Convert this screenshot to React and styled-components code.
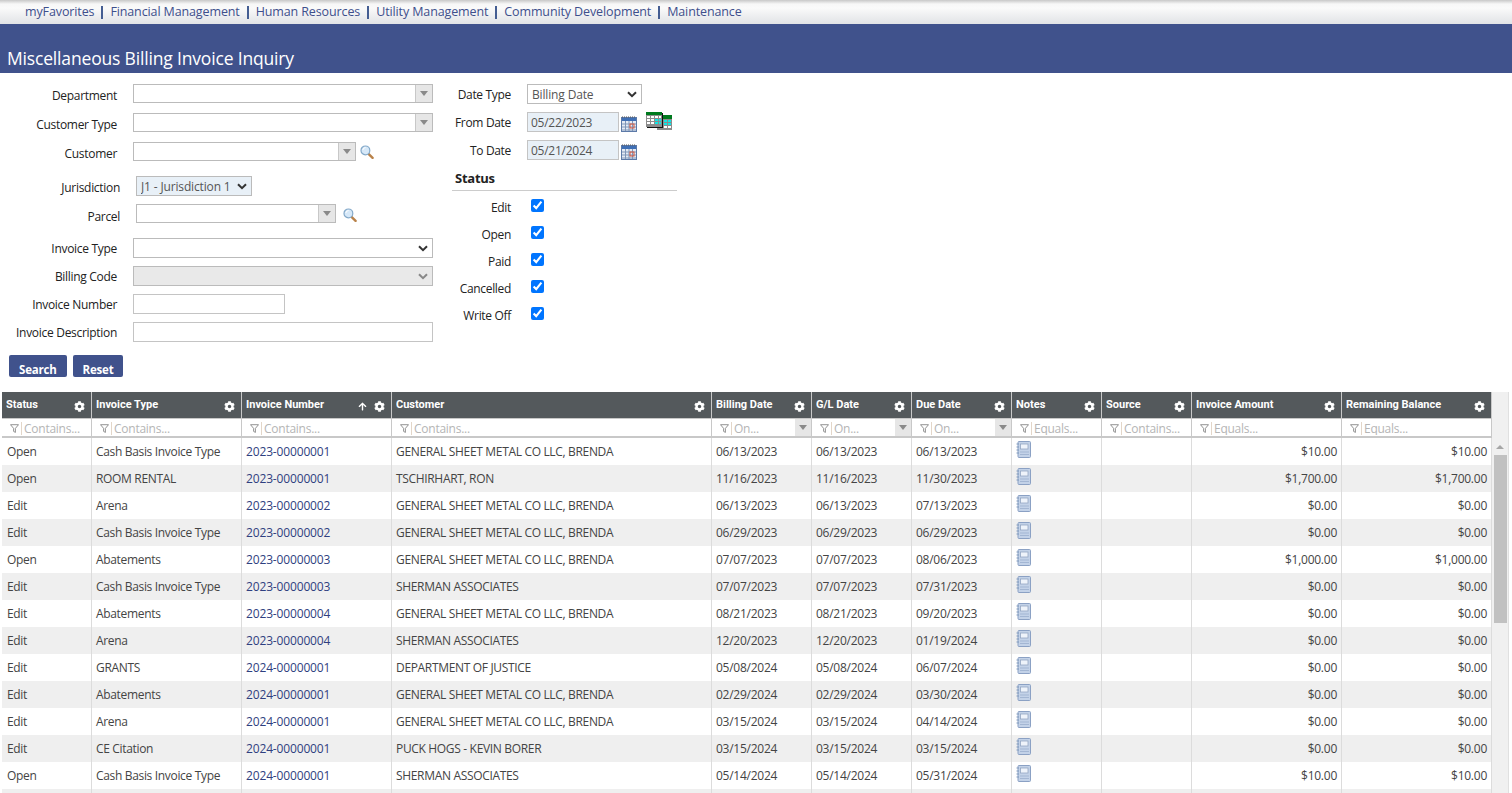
import React from "react";
import styled, { createGlobalStyle } from "styled-components";
import { FaCog, FaArrowUp } from "react-icons/fa";

const GlobalStyle = createGlobalStyle`
  html, body {
    margin: 0;
    height: 793px;
    overflow: hidden;
    background: #fff;
    font-family: "Open Sans", "Liberation Sans", sans-serif;
    font-size: 12px;
    letter-spacing: -0.25px;
    color: #222;
  }
`;

const columns = [
  { title: "Status", width: 90, filter: "Contains..." },
  { title: "Invoice Type", width: 150, filter: "Contains..." },
  { title: "Invoice Number", width: 150, filter: "Contains...", sorted: true },
  { title: "Customer", width: 320, filter: "Contains..." },
  { title: "Billing Date", width: 100, filter: "On...", menu: true },
  { title: "G/L Date", width: 100, filter: "On...", menu: true },
  { title: "Due Date", width: 100, filter: "On...", menu: true },
  { title: "Notes", width: 90, filter: "Equals..." },
  { title: "Source", width: 90, filter: "Contains..." },
  { title: "Invoice Amount", width: 150, filter: "Equals..." },
  { title: "Remaining Balance", width: 150, filter: "Equals..." },
];

const gs = "GENERAL SHEET METAL CO LLC, BRENDA";
const sa = "SHERMAN ASSOCIATES";
const cash = "Cash Basis Invoice Type";

const rows = [
  ["Open", cash, "2023-00000001", gs, "06/13/2023", "06/13/2023", "06/13/2023", "$10.00", "$10.00"],
  ["Open", "ROOM RENTAL", "2023-00000001", "TSCHIRHART, RON", "11/16/2023", "11/16/2023", "11/30/2023", "$1,700.00", "$1,700.00"],
  ["Edit", "Arena", "2023-00000002", gs, "06/13/2023", "06/13/2023", "07/13/2023", "$0.00", "$0.00"],
  ["Edit", cash, "2023-00000002", gs, "06/29/2023", "06/29/2023", "06/29/2023", "$0.00", "$0.00"],
  ["Open", "Abatements", "2023-00000003", gs, "07/07/2023", "07/07/2023", "08/06/2023", "$1,000.00", "$1,000.00"],
  ["Edit", cash, "2023-00000003", sa, "07/07/2023", "07/07/2023", "07/31/2023", "$0.00", "$0.00"],
  ["Edit", "Abatements", "2023-00000004", gs, "08/21/2023", "08/21/2023", "09/20/2023", "$0.00", "$0.00"],
  ["Edit", "Arena", "2023-00000004", sa, "12/20/2023", "12/20/2023", "01/19/2024", "$0.00", "$0.00"],
  ["Edit", "GRANTS", "2024-00000001", "DEPARTMENT OF JUSTICE", "05/08/2024", "05/08/2024", "06/07/2024", "$0.00", "$0.00"],
  ["Edit", "Abatements", "2024-00000001", gs, "02/29/2024", "02/29/2024", "03/30/2024", "$0.00", "$0.00"],
  ["Edit", "Arena", "2024-00000001", gs, "03/15/2024", "03/15/2024", "04/14/2024", "$0.00", "$0.00"],
  ["Edit", "CE Citation", "2024-00000001", "PUCK HOGS - KEVIN BORER", "03/15/2024", "03/15/2024", "03/15/2024", "$0.00", "$0.00"],
  ["Open", cash, "2024-00000001", sa, "05/14/2024", "05/14/2024", "05/31/2024", "$10.00", "$10.00"],
];

const menus = ["myFavorites", "Financial Management", "Human Resources", "Utility Management", "Community Development", "Maintenance"];

function Magnifier() {
  return (
    <svg width="14" height="14" viewBox="0 0 14 14">
      <path d="M8.5 8.8 L12.6 12.8" stroke="#b9824a" strokeWidth="2.4" strokeLinecap="round" />
      <circle cx="5.4" cy="5.4" r="4.4" fill="#d6e8f8" stroke="#84a9c9" strokeWidth="1.2" />
      <path d="M2.8 5 A2.8 2.8 0 0 1 5.6 2.6" stroke="#fff" strokeWidth="1" fill="none" />
    </svg>
  );
}

function CalendarIcon() {
  return (
    <svg width="16" height="16" viewBox="0 0 16 16">
      <rect x="0.5" y="1.5" width="15" height="14" fill="#e4eaf4" stroke="#5d7aa8" />
      <rect x="1" y="2" width="14" height="3" fill="#3f6fb5" />
      <path d="M1 1 H15" stroke="#555" strokeDasharray="1 1" />
      <path d="M1 8 H15 M1 11 H15 M1 14 H15 M4.5 5 V15 M8 5 V15 M11.5 5 V15" stroke="#7f96b8" />
      <rect x="9" y="8" width="4" height="4" fill="none" stroke="#d9573a" />
    </svg>
  );
}

function RangeCalendarIcon() {
  return (
    <svg width="26" height="18" viewBox="0 0 26 18">
      <rect x="11" y="3" width="15" height="15" fill="#8c8c8c" />
      <rect x="11" y="3" width="15" height="4" fill="#007a1e" />
      <path d="M18 8 h3 v2 h-3 z M22 8 h3 v2 h-3 z M18 11 h3 v2 h-3 z M22 11 h3 v2 h-3 z" fill="#10e6e6" />
      <path d="M18 14 h3 v2 h-3 z M22 14 h3 v2 h-3 z" fill="#fff" />
      <rect x="16" y="1" width="1" height="15" fill="#111" />
      <rect x="1" y="15" width="16" height="1" fill="#111" />
      <rect x="0" y="0" width="16" height="15" fill="#8c8c8c" />
      <rect x="0" y="0" width="16" height="3" fill="#007a1e" />
      <path d="M1 4 h3 v2 h-3 z M5 4 h3 v2 h-3 z M9 4 h3 v2 h-3 z M13 4 h2 v2 h-2 z M1 7 h3 v2 h-3 z M5 7 h3 v2 h-3 z M1 10 h3 v2 h-3 z M5 10 h3 v2 h-3 z" fill="#fff" />
      <path d="M9 7 h3 v2 h-3 z M13 7 h2 v2 h-2 z M9 10 h3 v2 h-3 z M13 10 h2 v2 h-2 z" fill="#10e6e6" />
    </svg>
  );
}

function FunnelIcon() {
  return (
    <svg width="9" height="9" viewBox="0 0 9 9">
      <path d="M0.5 0.7 H8.5 L5.4 4.4 V8.4 L3.6 7.4 V4.4 Z" fill="none" stroke="#777" strokeWidth="0.8" />
    </svg>
  );
}

function NoteIcon() {
  return (
    <svg width="15" height="17" viewBox="0 0 15 17">
      <rect x="2" y="0.5" width="12.5" height="16" rx="1" fill="#c3d2e8" stroke="#8ba1c4" />
      <rect x="4.5" y="3" width="7.5" height="5" fill="#eef3fa" stroke="#93a6c2" strokeWidth="0.8" />
      <path d="M0.5 3 H3 M0.5 6 H3 M0.5 9 H3 M0.5 12 H3" stroke="#8099bd" strokeWidth="1.2" />
      <path d="M4 11 H13 M4 13.5 H13" stroke="#a3b6d3" />
    </svg>
  );
}

function Combo({ width }) {
  return (
    <ComboBox $width={width}>
      <ComboInput />
      <ComboButton>
        <Triangle />
      </ComboButton>
    </ComboBox>
  );
}

function Field({ label, wide, top, nudge, children }) {
  return (
    <FieldRow $top={top}>
      <Label $wide={wide} $nudge={nudge}>{label}</Label>
      {children}
    </FieldRow>
  );
}

export default function App() {
  return (
    <>
      <GlobalStyle />
      <TopNav>
        {menus.map((m, i) => (
          <React.Fragment key={m}>
            {i > 0 && <NavSep />}
            <NavLink href="#">{m}</NavLink>
          </React.Fragment>
        ))}
      </TopNav>
      <TitleBand>
        <h1>Miscellaneous Billing Invoice Inquiry</h1>
      </TitleBand>

      <FormArea>
        <LeftColumn>
          <Field label="Department" top={0}><Combo width={300} /></Field>
          <Field label="Customer Type" top={10}><Combo width={300} /></Field>
          <Field label="Customer" top={10}>
            <Combo width={223} />
            <IconSlot $gap={4} $drop={3}><Magnifier /></IconSlot>
          </Field>
          <Field label="Jurisdiction" wide top={15}>
            <Dropdown $width={116} $tinted defaultValue="J1">
              <option value="J1">J1 - Jurisdiction 1</option>
            </Dropdown>
          </Field>
          <Field label="Parcel" wide top={8} nudge={1}>
            <Combo width={200} />
            <IconSlot $gap={7} $drop={4}><Magnifier /></IconSlot>
          </Field>
          <Field label="Invoice Type" top={15} nudge={-1}>
            <Dropdown $width={300}><option></option></Dropdown>
          </Field>
          <Field label="Billing Code" top={8} nudge={-1}>
            <Dropdown $width={300} disabled><option></option></Dropdown>
          </Field>
          <Field label="Invoice Number" top={8} nudge={-1}><TextBox $width={152} /></Field>
          <Field label="Invoice Description" top={8} nudge={-1}><TextBox $width={300} /></Field>
        </LeftColumn>

        <RightColumn>
          <DateRow>
            <DateLabel>Date Type</DateLabel>
            <Dropdown $width={115} defaultValue="billing">
              <option value="billing">Billing Date</option>
            </Dropdown>
          </DateRow>
          <DateRow $top={8}>
            <DateLabel>From Date</DateLabel>
            <DateBox defaultValue="05/22/2023" />
            <IconSlot $gap={2} $drop={4}><CalendarIcon /></IconSlot>
            <IconSlot $gap={9}><RangeCalendarIcon /></IconSlot>
          </DateRow>
          <DateRow $top={8}>
            <DateLabel>To Date</DateLabel>
            <DateBox defaultValue="05/21/2024" />
            <IconSlot $gap={2} $drop={4}><CalendarIcon /></IconSlot>
          </DateRow>
          <SectionHead>Status</SectionHead>
          {["Edit", "Open", "Paid", "Cancelled", "Write Off"].map((s) => (
            <CheckRow key={s}>
              <CheckLabel>{s}</CheckLabel>
              <Check type="checkbox" defaultChecked />
            </CheckRow>
          ))}
        </RightColumn>
      </FormArea>

      <Buttons>
        <ActionButton>Search</ActionButton>
        <ActionButton>Reset</ActionButton>
      </Buttons>

      <GridWrap>
        <Grid>
          <colgroup>
            {columns.map((c) => <col key={c.title} style={{ width: c.width }} />)}
          </colgroup>
          <thead>
            <tr>
              {columns.map((c) => (
                <HeadCell key={c.title}>
                  <HeadInner>
                    <HeadTitle>{c.title}</HeadTitle>
                    {c.sorted && <SortArrow size={9} />}
                    <FaCog size={11} />
                  </HeadInner>
                </HeadCell>
              ))}
            </tr>
            <tr>
              {columns.map((c) => (
                <FilterCell key={c.title}>
                  <FilterInner>
                    <FunnelIcon />
                    <FilterInput placeholder={c.filter} />
                    {c.menu && <FilterMenu><Triangle /></FilterMenu>}
                  </FilterInner>
                </FilterCell>
              ))}
            </tr>
          </thead>
          <tbody>
            {rows.map((r, i) => (
              <Row key={i}>
                <Cell $text>{r[0]}</Cell>
                <Cell $text>{r[1]}</Cell>
                <Cell $link>{r[2]}</Cell>
                <Cell $text>{r[3]}</Cell>
                <Cell>{r[4]}</Cell>
                <Cell>{r[5]}</Cell>
                <Cell>{r[6]}</Cell>
                <Cell><NoteIcon /></Cell>
                <Cell></Cell>
                <Cell $right>{r[7]}</Cell>
                <Cell $right>{r[8]}</Cell>
              </Row>
            ))}
            <Row>
              {columns.map((c) => <Cell key={c.title}></Cell>)}
            </Row>
          </tbody>
        </Grid>
        <ScrollGutter>
          <ScrollArrow />
          <ScrollThumb />
        </ScrollGutter>
      </GridWrap>
    </>
  );
}

const TopNav = styled.nav`
  height: 24px;
  box-sizing: border-box;
  padding: 4px 0 0 25px;
  display: flex;
  align-items: flex-start;
  gap: 7px;
  background: linear-gradient(#c8c8c8 0, #f7f7f7 4px, #fafafa 8px, #e1e3e6 100%);
`;

const NavLink = styled.a`
  color: #3e4f8c;
  font-size: 12.5px;
  line-height: 16px;
  letter-spacing: -0.12px;
  text-decoration: none;
`;

const NavSep = styled.span`
  width: 2px;
  height: 13px;
  margin-top: 2px;
  background: #445d92;
`;

const TitleBand = styled.header`
  height: 49px;
  box-sizing: border-box;
  background: #40528c;
  padding: 22px 0 0 7px;

  h1 {
    margin: 0;
    color: #fff;
    font-size: 17.5px;
    line-height: 24px;
    font-weight: 400;
    letter-spacing: -0.17px;
  }
`;

const FormArea = styled.section`
  display: flex;
  gap: 19px;
  padding-top: 11px;
  height: 260px;
  box-sizing: border-box;
`;

const LeftColumn = styled.div`
  width: 433px;
`;

const RightColumn = styled.div`
  width: 225px;
`;

const FieldRow = styled.div`
  display: flex;
  align-items: flex-start;
  gap: 16px;
  margin-top: ${(p) => p.$top}px;
`;

const Label = styled.label`
  width: ${(p) => (p.$wide ? 120 : 117)}px;
  height: 19px;
  box-sizing: border-box;
  flex: none;
  text-align: right;
  line-height: 16px;
  padding-top: ${(p) => 4 + (p.$nudge || 0)}px;
  letter-spacing: -0.3px;
  white-space: nowrap;
`;

const ComboBox = styled.div`
  display: flex;
  width: ${(p) => p.$width}px;
  height: 19px;
  box-sizing: border-box;
  border: 1px solid #bbb;
  background: #fff;
`;

const ComboInput = styled.div`
  flex: 1;
`;

const ComboButton = styled.div`
  width: 16px;
  background: #e6e6e6;
  border-left: 1px solid #c8c8c8;
  display: flex;
  align-items: center;
  justify-content: center;
`;

const Triangle = styled.span`
  width: 0;
  height: 0;
  border-left: 4px solid transparent;
  border-right: 4px solid transparent;
  border-top: 5px solid #8a8a8a;
`;

const IconSlot = styled.span`
  display: inline-flex;
  margin-left: ${(p) => p.$gap - 16}px;
  margin-top: ${(p) => p.$drop || 0}px;
`;

const chevron = (stroke) =>
  `url("data:image/svg+xml,%3Csvg xmlns='http://www.w3.org/2000/svg' width='10' height='7' viewBox='0 0 10 7'%3E%3Cpath d='M1 1.2 L5 5.2 L9 1.2' fill='none' stroke='${stroke}' stroke-width='2'/%3E%3C/svg%3E")`;

const Dropdown = styled.select`
  appearance: none;
  width: ${(p) => p.$width}px;
  height: 20px;
  box-sizing: border-box;
  padding: 0 0 0 4px;
  border: 1px solid #bbb;
  border-radius: 0;
  font: inherit;
  letter-spacing: -0.15px;
  color: #555;
  background-color: ${(p) => (p.$tinted ? "#e8f0f7" : "#fff")};
  background-image: ${chevron("%23333")};
  background-repeat: no-repeat;
  background-position: right 4px center;

  &:disabled {
    background-color: #e9e9e9;
    background-image: ${chevron("%23888")};
    opacity: 1;
  }
`;

const TextBox = styled.input`
  width: ${(p) => p.$width}px;
  height: 20px;
  box-sizing: border-box;
  border: 1px solid #c4c4c4;
  padding: 0 3px;
  font: inherit;
`;

const DateRow = styled.div`
  display: flex;
  align-items: flex-start;
  gap: 16px;
  margin-top: ${(p) => p.$top || 0}px;
`;

const DateLabel = styled.span`
  width: 59px;
  flex: none;
  text-align: right;
  line-height: 16px;
  padding-top: 3px;
  letter-spacing: -0.32px;
  white-space: nowrap;
`;

const DateBox = styled.input`
  width: 92px;
  height: 20px;
  box-sizing: border-box;
  border: 1px solid #c4c4c4;
  background: #e8f0f7;
  padding: 1px 3px 0;
  font: inherit;
  letter-spacing: inherit;
  color: #555;
`;

const SectionHead = styled.h3`
  margin: 8px 0 0;
  height: 23px;
  box-sizing: border-box;
  padding: 2px 0 0 3px;
  font-size: 13px;
  line-height: 16px;
  font-weight: 700;
  border-bottom: 1px solid #ccc;
`;

const CheckRow = styled.div`
  display: flex;
  align-items: flex-start;
  gap: 20px;
  height: 27px;
  padding-top: 7px;
  box-sizing: border-box;
`;

const CheckLabel = styled(DateLabel)`
  padding-top: 2px;
`;

const Check = styled.input`
  width: 13px;
  height: 13px;
  margin: 1px 0 0;
  accent-color: #0075ff;
`;

const Buttons = styled.div`
  display: flex;
  gap: 6px;
  padding-left: 9px;
  margin-top: 22px;
`;

const ActionButton = styled.button`
  height: 22px;
  box-sizing: border-box;
  padding: 7px 10px 0;
  border: none;
  border-radius: 2px;
  background: #40528c;
  color: #fff;
  font: 700 11.5px/14px "Open Sans", sans-serif;
  letter-spacing: -0.2px;
`;

const GridWrap = styled.div`
  display: flex;
  margin: 15px 0 0 2px;
`;

const Grid = styled.table`
  width: 1490px;
  flex: none;
  align-self: flex-start;
  table-layout: fixed;
  border-collapse: separate;
  border-spacing: 0;
`;

const HeadCell = styled.th`
  height: 27px;
  padding: 0;
  background: #54595c;
  box-sizing: border-box;
  border-right: 1px solid #c8c8c8;
  border-bottom: 1px solid #c8c8c8;
  color: #fff;
  text-align: left;
`;

const HeadInner = styled.div`
  display: flex;
  align-items: center;
  gap: 5px;
  height: 26px;
  padding: 0 6px 0 4px;
  svg {
    flex: none;
    margin-top: 3px;
  }
`;

const SortArrow = styled(FaArrowUp)`
  margin-right: 2px;
`;

const HeadTitle = styled.span`
  flex: 1;
  font: 700 11px/14px Roboto, sans-serif;
  letter-spacing: 0;
  white-space: nowrap;
  overflow: hidden;
`;

const FilterCell = styled.td`
  height: 19px;
  padding: 0;
  box-sizing: border-box;
  background: #fff;
  border-right: 1px solid #c8c8c8;
  border-bottom: 2px solid #c8c8c8;
`;

const FilterInner = styled.div`
  display: flex;
  align-items: center;
  height: 17px;
  box-sizing: border-box;
  padding-left: 8px;
  svg {
    flex: none;
    margin: 1px 2px 0 0;
  }
`;

const FilterInput = styled.input`
  flex: 1;
  min-width: 0;
  height: 13px;
  margin-top: 1px;
  border: none;
  border-left: 1px solid #e3d6c8;
  padding: 0 0 0 2px;
  outline: none;
  font: inherit;
  letter-spacing: inherit;
  &::placeholder {
    color: #b5b5b5;
  }
`;

const FilterMenu = styled.span`
  width: 16px;
  height: 17px;
  flex: none;
  background: #e6e6e6;
  display: flex;
  align-items: center;
  justify-content: center;
`;

const Row = styled.tr`
  &:nth-child(even) td {
    background: #efefef;
  }
`;

const Cell = styled.td`
  height: 27px;
  box-sizing: border-box;
  padding: 0 ${(p) => (p.$right ? 4 : 3)}px 0 4px;
  border-right: 1px solid #dcdcdc;
  color: ${(p) => (p.$link ? "#2f3f80" : "#444")};
  letter-spacing: ${(p) => (p.$text ? -0.33 : p.$link ? -0.15 : -0.25)}px;
  text-align: ${(p) => (p.$right ? "right" : "left")};
  white-space: nowrap;
  overflow: hidden;
  line-height: 16px;
  &:first-child {
    padding-left: 5px;
  }
  svg {
    display: block;
    margin-top: -4px;
  }
`;

const ScrollGutter = styled.div`
  width: 16px;
  flex: none;
  background: #f0f0f0;
  border-right: 1px solid #e0e0e0;
  display: flex;
  flex-direction: column;
  align-items: center;
  padding-top: 53px;
`;

const ScrollArrow = styled.span`
  width: 0;
  height: 0;
  border-left: 4px solid transparent;
  border-right: 4px solid transparent;
  border-bottom: 4px solid #a6a6a6;
  margin-bottom: 6px;
`;

const ScrollThumb = styled.div`
  width: 13px;
  height: 168px;
  background: #c1c1c1;
`;
